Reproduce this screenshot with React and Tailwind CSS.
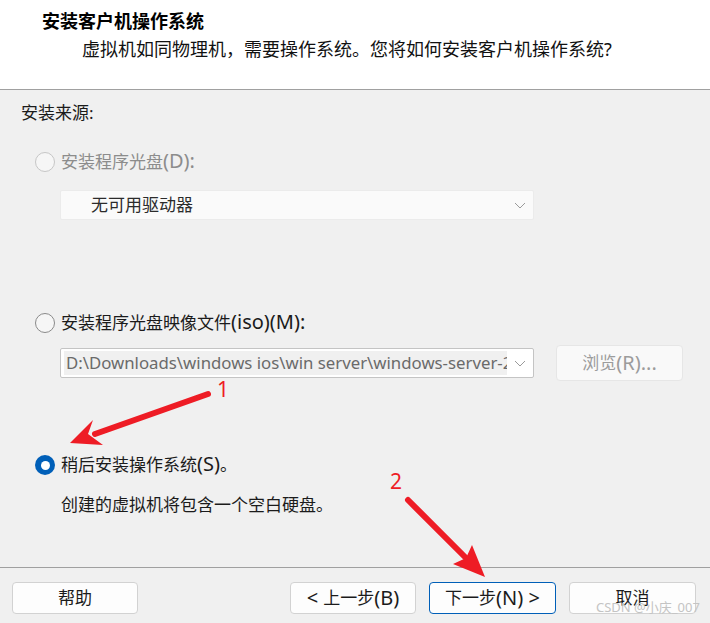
import React from "react";

const FONT = { fontFamily: '"Noto Sans", "Noto Sans CJK SC", sans-serif' };

function L({ children }) {
  return <span className="text-[20px] leading-[16px]">{children}</span>;
}

function Radio({ state }) {
  if (state === "checked") {
    return (
      <span className="w-[20px] h-[20px] rounded-full bg-[#005fb8] flex items-center justify-center shrink-0">
        <span className="w-[9px] h-[9px] rounded-full bg-white" />
      </span>
    );
  }
  if (state === "disabled") {
    return <span className="w-[20px] h-[20px] rounded-full border border-[#c6c6c6] bg-[#f6f6f6] shrink-0" />;
  }
  return <span className="w-[20px] h-[20px] rounded-full border border-[#8a8a8a] bg-[#f6f6f6] shrink-0" />;
}

function Chevron() {
  return (
    <svg width="12" height="7" viewBox="0 0 12 7" className="shrink-0">
      <path d="M1 1 L6 6 L11 1" fill="none" stroke="#9a9a9a" strokeWidth="1" />
    </svg>
  );
}

function Btn({ children, w, primary }) {
  return (
    <div
      className={`h-[32px] ${w} rounded-[4px] bg-[#fdfdfd] flex items-center justify-center text-[17px] leading-[24px] text-[#1b1b1b] border whitespace-nowrap ${
        primary ? "border-[#005fb8]" : "border-[#d2d2d2]"
      }`}
    >
      {children}
    </div>
  );
}

export default function App() {
  return (
    <div className="relative w-[710px] h-[623px] overflow-hidden bg-[#f0f0f0] flex flex-col" style={FONT}>
      {/* Header */}
      <div className="h-[90px] bg-white border-b border-[#a0a0a0] pl-[42px] pt-[9px] shrink-0">
        <div className="text-[18px] leading-[24px] font-bold text-black">安装客户机操作系统</div>
        <div className="text-[18px] leading-[24px] text-[#111] pl-[40px] mt-[4px]">
          虚拟机如同物理机，需要操作系统。您将如何安装客户机操作系统?
        </div>
      </div>

      {/* Body */}
      <div className="h-[477px] shrink-0 pl-[21px] pt-[11px] flex flex-col text-[17px] leading-[24px]">
        <div className="h-[24px] text-[#1b1b1b]">安装来源:</div>

        <div className="mt-[25px] ml-[14px] h-[24px] flex items-center gap-[6px] text-[#8c8c8c]">
          <Radio state="disabled" />
          <span className="whitespace-nowrap">
            安装程序光盘<L>(D):</L>
          </span>
        </div>

        <div className="mt-[16px] ml-[39px] w-[474px] h-[30px] bg-[#fafafa] border border-[#ebebeb] rounded-[2px] flex items-center pl-[30px] pr-[7px]">
          <span className="flex-1 text-[#2b2b2b]">无可用驱动器</span>
          <Chevron />
        </div>

        <div className="mt-[91px] ml-[14px] h-[24px] flex items-center gap-[6px] text-[#1b1b1b]">
          <Radio state="normal" />
          <span className="whitespace-nowrap">
            安装程序光盘映像文件<L>(iso)(M):</L>
          </span>
        </div>

        <div className="mt-[10px] ml-[39px] h-[36px] flex items-center">
          <div className="w-[474px] h-[30px] bg-white border border-[#c4c4c4] rounded-[2px] flex items-center pl-[3px] pr-[7px]">
            <div className="w-[443px] h-[24px] bg-[#f0f0f0] overflow-hidden whitespace-nowrap pl-[2px] text-[#6a6a6a] text-[16.8px]">
              D:\Downloads\windows ios\win server\windows-server-2022
            </div>
            <div className="flex-1 flex justify-end">
              <Chevron />
            </div>
          </div>
          <div className="ml-[22px] w-[127px] h-[36px] bg-[#f9f9f9] border border-[#e6e6e6] rounded-[4px] flex items-center justify-center text-[#9c9c9c] whitespace-nowrap">
            浏览<L>(R)...</L>
          </div>
        </div>

        <div className="mt-[72px] ml-[14px] h-[24px] flex items-center gap-[6px] text-[#1b1b1b]">
          <Radio state="checked" />
          <span className="whitespace-nowrap">
            稍后安装操作系统<L>(S)</L>。
          </span>
        </div>

        <div className="mt-[16px] ml-[40px] h-[24px] text-[#1b1b1b]">创建的虚拟机将包含一个空白硬盘。</div>
      </div>

      {/* Footer */}
      <div className="flex-1 border-t border-[#a0a0a0] flex items-start pt-[14px] pl-[12px]">
        <Btn w="w-[126px]">帮助</Btn>
        <div className="ml-[152px] flex gap-[13px]">
          <Btn w="w-[126px]">
            <L>&lt;&nbsp;</L>上一步<L>(B)</L>
          </Btn>
          <Btn w="w-[127px]" primary>
            下一步<L>(N) &gt;</L>
          </Btn>
          <Btn w="w-[127px]">取消</Btn>
        </div>
      </div>

      {/* Annotations */}
      <svg className="absolute left-0 top-0 pointer-events-none" width="710" height="623" viewBox="0 0 710 623">
        <line x1="208" y1="394" x2="95" y2="434" stroke="#ee1c25" strokeWidth="6" strokeLinecap="round" />
        <polygon points="70,443 93,420 88,434 103,445" fill="#ee1c25" />
        <line x1="408" y1="500" x2="465" y2="557" stroke="#ee1c25" strokeWidth="6" strokeLinecap="round" />
        <polygon points="485,577 453,564 466,558 472,545" fill="#ee1c25" />
      </svg>
      <div className="absolute left-[217px] top-[377px] text-[21px] leading-[24px] text-[#ee1c25]" style={{ fontFamily: '"Noto Sans", sans-serif' }}>
        1
      </div>
      <div className="absolute left-[390px] top-[469px] text-[21px] leading-[24px] text-[#ee1c25]" style={{ fontFamily: '"Noto Sans", sans-serif' }}>
        2
      </div>
      <div className="absolute left-[596px] top-[599px] text-[13px] leading-[16px] text-[#c4c4c4]" style={FONT}>
        CSDN @小庆_007
      </div>
    </div>
  );
}
